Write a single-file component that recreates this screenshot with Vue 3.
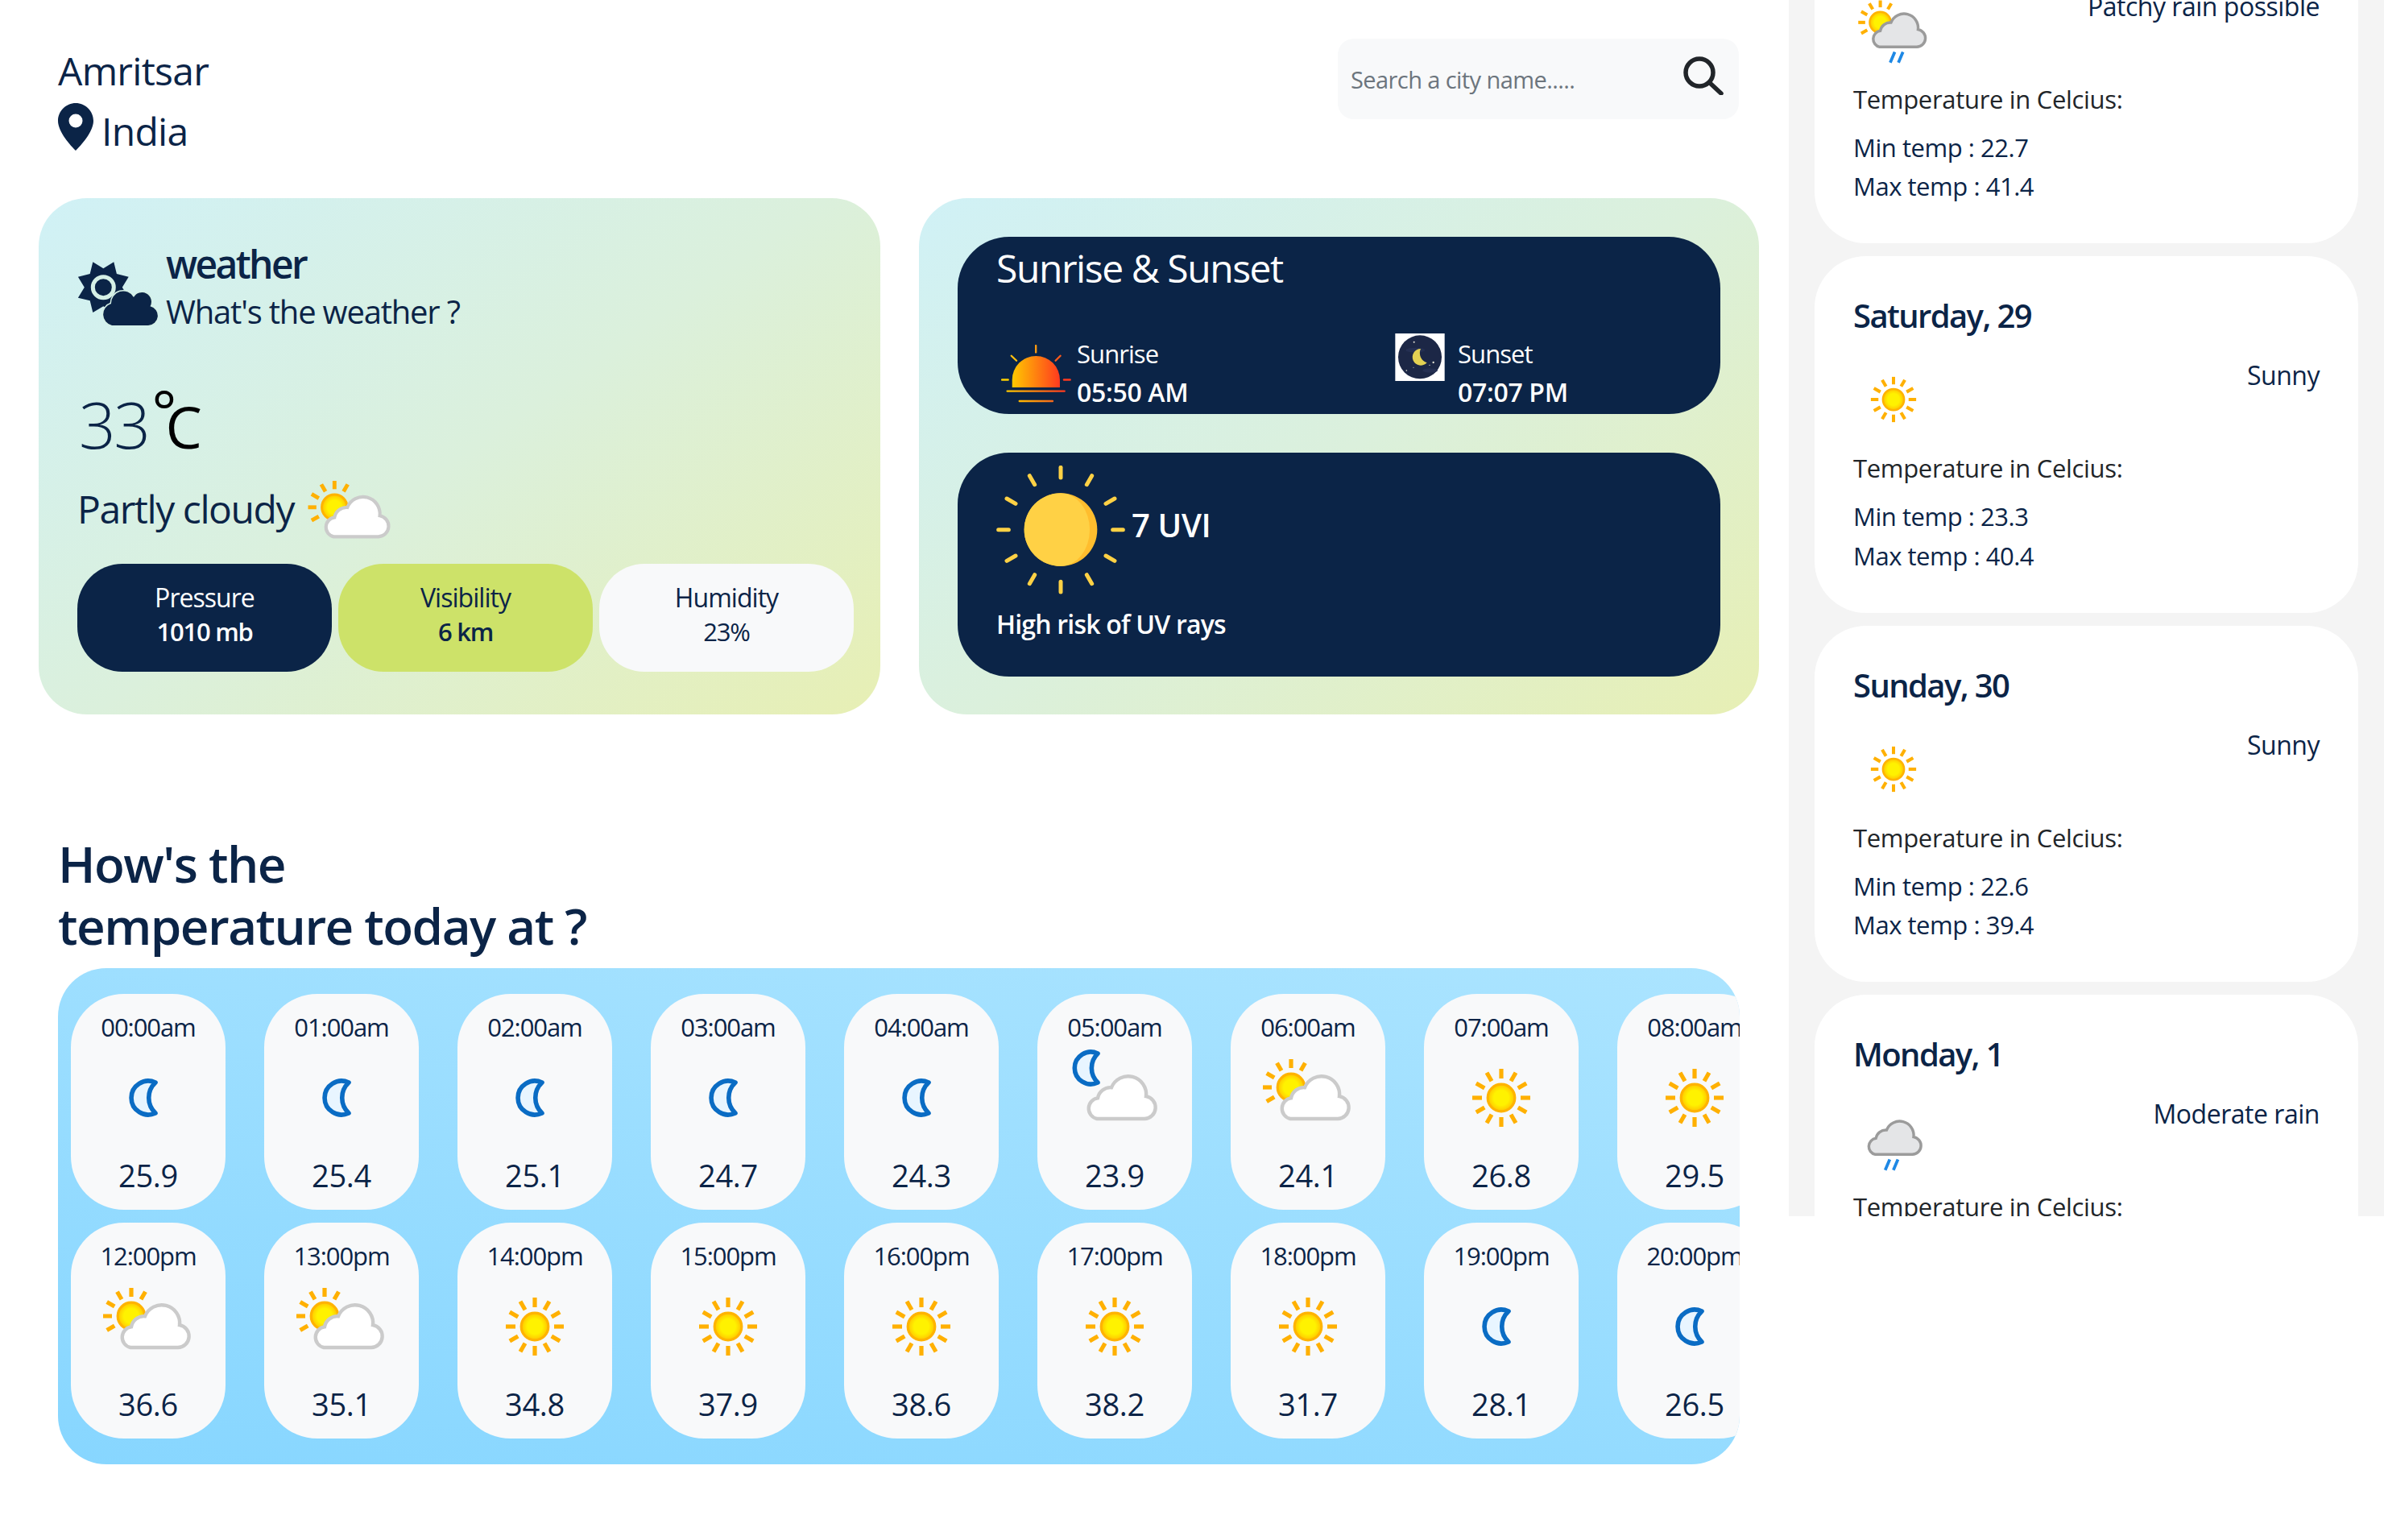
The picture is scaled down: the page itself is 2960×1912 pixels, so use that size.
<template>
  <div class="app">
    <!-- icon sprite -->
    <svg class="sprite" width="0" height="0" aria-hidden="true">
      <defs>
        <linearGradient id="rise-grad" x1="0" x2="1" y1="0" y2="0">
          <stop offset="0" stop-color="#ffc800" />
          <stop offset="1" stop-color="#ff3a1f" />
        </linearGradient>
        <linearGradient id="rise-line" gradientUnits="userSpaceOnUse" x1="123" x2="335" y1="0" y2="0">
          <stop offset="0" stop-color="#ffc800" />
          <stop offset="1" stop-color="#ff3a1f" />
        </linearGradient>
        <linearGradient id="rise-line2" gradientUnits="userSpaceOnUse" x1="168" x2="291" y1="0" y2="0">
          <stop offset="0" stop-color="#ffb800" />
          <stop offset="1" stop-color="#f4681c" />
        </linearGradient>
        <radialGradient id="sun-core">
          <stop offset="0.55" stop-color="#fff200" />
          <stop offset="1" stop-color="#ffc400" />
        </radialGradient>
        <path id="cloud-shape" d="M21 45H50.5a7 7 0 0 0 1-13.9A11.2 11.2 0 0 0 30 25.6a8 8 0 0 0-8.5 6.6 6.5 6.5 0 0 0-.5 12.8z" />
        <g id="rays-full" stroke="#ffb000" stroke-width="2.6">
          <path v-for="a in 12" :key="a" d="M32 20V14" :transform="`rotate(${a * 30} 32 32)`" />
        </g>
        <g id="rays-part" stroke="#ffb000" stroke-width="2.6">
          <path v-for="a in [-120, -90, -60, -30, 0, 30]" :key="a" d="M21.5 13.5V8" :transform="`rotate(${a} 21.5 25.5)`" />
        </g>
        <symbol id="i-sun" viewBox="0 0 64 64">
          <use href="#rays-full" />
          <circle cx="32" cy="32" r="8.4" fill="url(#sun-core)" stroke="#ffb300" stroke-width="1.6" />
        </symbol>
        <symbol id="i-moon" viewBox="0 0 64 64">
          <path d="M36.5 22.5A10.5 10.5 0 1 0 36.5 41.5A13 13 0 0 1 36.5 22.5z" fill="#e8f5ff" stroke="#0a6cc4" stroke-width="2.8" stroke-linejoin="round" />
        </symbol>
        <symbol id="i-partly" viewBox="0 0 64 64">
          <use href="#rays-part" />
          <circle cx="21.5" cy="25.5" r="8.4" fill="url(#sun-core)" stroke="#ffb300" stroke-width="1.6" />
          <use href="#cloud-shape" fill="#fff" stroke="#cbcbcb" stroke-width="2.2" />
        </symbol>
        <symbol id="i-night-cloud" viewBox="0 0 64 64">
          <path d="M21.5 4.500A10 10 0 1 0 21.5 22.500A12.500 12.500 0 0 1 21.5 4.500z" fill="#e8f5ff" stroke="#0a6cc4" stroke-width="2.8" stroke-linejoin="round" />
          <use href="#cloud-shape" fill="#fff" stroke="#cbcbcb" stroke-width="2.2" />
        </symbol>
        <symbol id="i-patchy" viewBox="0 0 64 64">
          <use href="#rays-part" />
          <circle cx="21.5" cy="25.5" r="8.4" fill="url(#sun-core)" stroke="#ffb300" stroke-width="1.6" />
          <use href="#cloud-shape" fill="#e4e5e7" stroke="#9b9b9b" stroke-width="2.2" />
          <path d="M33 49l-3.600 8.500M39.500 49l-3.600 8.500" stroke="#1e88e5" stroke-width="2.400" />
        </symbol>
        <symbol id="i-rain" viewBox="0 0 64 64">
          <use href="#cloud-shape" x="-3.500" fill="#e4e5e7" stroke="#9b9b9b" stroke-width="2.2" />
          <path d="M29 49l-3.600 8.500M35.500 49l-3.600 8.500" stroke="#1e88e5" stroke-width="2.400" />
        </symbol>
      </defs>
    </svg>

    <main class="main">
      <header class="top">
        <div class="place">
          <div class="city">Amritsar</div>
          <div class="country">
            <svg class="pin" viewBox="0 0 44 59">
              <path fill-rule="evenodd" d="M22 0C10 0 0 10 0 22c0 14 16 31 22 37 6-6 22-23 22-37C44 10 34 0 22 0zm0 13.500a8.500 8.500 0 1 1 0 17 8.500 8.500 0 0 1 0-17z" />
            </svg>
            <span>India</span>
          </div>
        </div>
        <div class="search">
          <input class="search-input" type="text" placeholder="Search a city name....." />
          <svg class="search-icon" viewBox="0 0 50 48" fill="none" stroke="#212529" stroke-width="5.500" stroke-linecap="round">
            <circle cx="20" cy="20" r="17" />
            <path d="M33 33l14 13" />
          </svg>
        </div>
      </header>

      <section class="panels">
        <div class="panel">
          <div class="brand">
            <svg class="brand-icon" viewBox="0 0 100 80">
              <polygon :points="starPoints" fill="#0b2447" />
              <circle cx="32.300" cy="31.700" r="13" fill="#0b2447" stroke="#d5f0e6" stroke-width="5" />
              <path d="M43 79H88a12 12 0 0 0 2.500-23.700A11.500 11.500 0 0 0 70 44 15 15 0 0 0 42 52a14 14 0 0 0 1 27z" fill="#0b2447" stroke="#d5f0e6" stroke-width="3" paint-order="stroke" />
            </svg>
            <div class="brand-text">
              <div class="brand-title">weather</div>
              <div class="brand-sub">What's the weather ?</div>
            </div>
          </div>
          <div class="temp"><span class="temp-num">33</span><span class="deg">°</span><span class="deg-c">C</span></div>
          <div class="cond">
            <span>Partly cloudy</span>
            <svg class="cond-icon"><use href="#i-partly" /></svg>
          </div>
          <div class="pills">
            <div class="pill pill-dark"><div>Pressure</div><b>1010 mb</b></div>
            <div class="pill pill-lime"><div>Visibility</div><b>6 km</b></div>
            <div class="pill pill-light"><div>Humidity</div><b class="thin">23%</b></div>
          </div>
        </div>

        <div class="panel panel-side">
          <div class="dark-box sun-box">
            <div class="sun-title">Sunrise &amp; Sunset</div>
            <div class="sun-row">
              <div class="sun-col">
                <svg class="rise-icon" viewBox="100 85 260 215" fill="none" stroke-linecap="round">
                  <path d="M141 243V215A88 88 0 0 1 318 215V243z" fill="url(#rise-grad)" />
                  <g stroke-width="7">
                    <path d="M229 88V113" stroke="#ff9a10" />
                    <path d="M138 126L157 144" stroke="#ffc010" />
                    <path d="M320 126L302 144" stroke="#ff5a1a" />
                    <path d="M103 215H126" stroke="#ffd000" />
                    <path d="M333 215H356" stroke="#ff3a1f" />
                    <path d="M123 257H335" stroke="url(#rise-line)" />
                    <path d="M168 294H291" stroke="url(#rise-line2)" />
                  </g>
                </svg>
                <div class="sun-text"><div class="sun-label">Sunrise</div><b>05:50 AM</b></div>
              </div>
              <div class="sun-col">
                <svg class="set-icon" viewBox="0 0 184 177">
                  <rect width="184" height="177" fill="#fff" />
                  <circle cx="92" cy="88" r="81" fill="#1c2746" />
                  <ellipse cx="75" cy="62" rx="36" ry="9" fill="#242f52" />
                  <ellipse cx="130" cy="138" rx="28" ry="8" fill="#242f52" />
                  <path d="M95 57A31 31 0 1 0 118 109A38 38 0 0 1 95 57z" fill="#e3d153" />
                  <g fill="#e8e6d8">
                    <circle cx="70" cy="32" r="3" />
                    <circle cx="142" cy="108" r="3.500" />
                    <circle cx="128" cy="118" r="2" />
                    <circle cx="42" cy="138" r="2.500" />
                    <circle cx="68" cy="127" r="1.500" />
                  </g>
                </svg>
                <div class="sun-text"><div class="sun-label">Sunset</div><b>07:07 PM</b></div>
              </div>
            </div>
          </div>

          <div class="dark-box uv-box">
            <div class="uv-row">
              <svg class="uv-icon" viewBox="80 533 480 480">
                <g stroke="#ffd145" stroke-width="15" stroke-linecap="round">
                  <path v-for="a in 12" :key="a" d="M320 540V578" :transform="`rotate(${a * 30} 320 772)`" />
                </g>
                <circle cx="320" cy="772" r="136" fill="#ffbd2e" />
                <path d="M320 636A136 136 0 0 0 320 908A108 136 0 0 0 320 636z" fill="#ffd145" />
              </svg>
              <span class="uv-val">7 UVI</span>
            </div>
            <div class="uv-note">High risk of UV rays</div>
          </div>
        </div>
      </section>

      <section class="today">
        <h2 class="today-title">How's the<br />temperature today at ?</h2>
        <div class="hours">
          <div v-for="h in hours" :key="h.time" class="hour">
            <div class="hour-time">{{ h.time }}</div>
            <svg class="hour-icon"><use :href="`#i-${h.icon}`" /></svg>
            <div class="hour-temp">{{ h.temp }}</div>
          </div>
        </div>
      </section>
    </main>

    <aside ref="sideEl" class="side">
      <div v-for="d in days" :key="d.day" class="day">
        <div class="day-name">{{ d.day }}</div>
        <div class="day-row">
          <svg class="day-icon"><use :href="`#i-${d.icon}`" /></svg>
          <div class="day-cond">{{ d.cond }}</div>
        </div>
        <div class="day-label">Temperature in Celcius:</div>
        <div class="day-temp">Min temp : {{ d.min }}</div>
        <div class="day-temp">Max temp : {{ d.max }}</div>
      </div>
    </aside>
  </div>
</template>

<script setup>
import { ref, computed, onMounted } from 'vue'

const sideEl = ref(null)

const makeRow = (rows, suffix) =>
  rows.map(([time, icon, temp]) => ({ time: time + suffix, icon, temp }))

// 每行只显示前 9 个小时
const hours = [
  ...makeRow([
    ['00:00', 'moon', '25.9'],
    ['01:00', 'moon', '25.4'],
    ['02:00', 'moon', '25.1'],
    ['03:00', 'moon', '24.7'],
    ['04:00', 'moon', '24.3'],
    ['05:00', 'night-cloud', '23.9'],
    ['06:00', 'partly', '24.1'],
    ['07:00', 'sun', '26.8'],
    ['08:00', 'sun', '29.5']
  ], 'am'),
  ...makeRow([
    ['12:00', 'partly', '36.6'],
    ['13:00', 'partly', '35.1'],
    ['14:00', 'sun', '34.8'],
    ['15:00', 'sun', '37.9'],
    ['16:00', 'sun', '38.6'],
    ['17:00', 'sun', '38.2'],
    ['18:00', 'sun', '31.7'],
    ['19:00', 'moon', '28.1'],
    ['20:00', 'moon', '26.5']
  ], 'pm')
]

const days = [
  { day: 'Friday, 28', icon: 'patchy', cond: 'Patchy rain possible', min: '22.7', max: '41.4' },
  { day: 'Saturday, 29', icon: 'sun', cond: 'Sunny', min: '23.3', max: '40.4' },
  { day: 'Sunday, 30', icon: 'sun', cond: 'Sunny', min: '22.6', max: '39.4' },
  { day: 'Monday, 1', icon: 'rain', cond: 'Moderate rain', min: '21.8', max: '35.2' }
]

// 8-point sun for the brand icon
const starPoints = computed(() => {
  const pts = []
  for (let i = 0; i < 16; i++) {
    const r = i % 2 ? 34 : 23.5
    const a = (i * 22.5 * Math.PI) / 180
    pts.push(`${(32.3 + r * Math.sin(a)).toFixed(1)},${(31.7 - r * Math.cos(a)).toFixed(1)}`)
  }
  return pts.join(' ')
})

onMounted(() => {
  if (sideEl.value) sideEl.value.scrollTop = 156
})
</script>

<style>
body {
  background: #fff;
}
</style>

<style scoped>
.app {
  display: flex;
  align-items: flex-start;
  width: 2960px;
  height: 1912px;
  overflow: hidden;
  color: #0b2447;
  font-family: "Open Sans", "Noto Sans", sans-serif;
  letter-spacing: -0.02em;
}

.sprite {
  width: 0;
  height: 0;
  display: block;
  flex: none;
}

.main {
  width: 2221px;
  flex: none;
}

/* header */
.top {
  height: 246px;
  padding: 48px 62px 0 72px;
  box-sizing: border-box;
  display: flex;
  justify-content: space-between;
  align-items: flex-start;
}

.place {
  font-size: 48px;
  line-height: 75px;
  margin-top: 2px;
  letter-spacing: -0.015em;
}

.country {
  display: flex;
  align-items: center;
  gap: 10px;
}

.pin {
  width: 44px;
  height: 59px;
  fill: #0b2447;
  margin-top: -10px;
}

.search {
  width: 498px;
  height: 100px;
  border-radius: 20px;
  background: #f8f9fa;
  display: flex;
  align-items: center;
  padding: 0 19px 0 16px;
  box-sizing: border-box;
}

.search-input {
  flex: 1;
  min-width: 0;
  border: none;
  outline: none;
  background: transparent;
  padding: 0;
  font: inherit;
  font-size: 29px;
  letter-spacing: -0.02em;
  color: #0b2447;
}

.search-input::placeholder {
  color: #6c757d;
  opacity: 1;
}

.search-icon {
  width: 50px;
  height: 48px;
  margin-top: -8px;
}

/* panels */
.panels {
  display: flex;
  gap: 48px;
  padding-left: 48px;
}

.panel {
  width: 1045px;
  height: 641px;
  box-sizing: border-box;
  border-radius: 60px;
  background: linear-gradient(145deg, #d0f1f6 0%, #dbf0dc 50%, #e7efb4 100%);
  padding: 48px 32px 0 48px;
}

.panel-side {
  width: 1043px;
  padding: 48px;
  display: flex;
  flex-direction: column;
  gap: 48px;
}

.brand {
  display: flex;
  align-items: center;
  gap: 10px;
  height: 126px;
}

.brand-icon {
  width: 100px;
  height: 80px;
  flex: none;
  margin-top: 16px;
}

.brand-title {
  font-size: 48px;
  line-height: 60px;
  font-weight: 600;
  letter-spacing: -0.055em;
}

.brand-sub {
  font-size: 40px;
  line-height: 58px;
  letter-spacing: -0.03em;
}

.temp {
  height: 110px;
  line-height: 110px;
  font-size: 80px;
  margin-top: 51px;
  padding-left: 2px;
  white-space: nowrap;
}

.temp-num {
  font-weight: 300;
  letter-spacing: -0.03em;
}

.deg,
.deg-c {
  color: #000;
  font-size: 72px;
  letter-spacing: 0;
  line-height: 0;
}

.deg {
  vertical-align: 20px;
  margin-right: -14px;
  margin-left: 4px;
}

.cond {
  display: flex;
  align-items: center;
  gap: 10px;
  font-size: 48px;
  height: 72px;
  margin-top: 14px;
  letter-spacing: -0.03em;
}

.cond-icon {
  width: 120px;
  height: 120px;
  flex: none;
  margin-top: 22px;
}

.pills {
  display: flex;
  gap: 8px;
  margin-top: 33px;
}

.pill {
  width: 316px;
  height: 134px;
  box-sizing: border-box;
  border-radius: 56px;
  display: flex;
  flex-direction: column;
  align-items: center;
  justify-content: center;
  padding-bottom: 9px;
  font-size: 32px;
  line-height: 43px;
  letter-spacing: -0.03em;
}

.pill b {
  font-size: 31px;
  font-weight: 600;
  letter-spacing: -0.04em;
}

.pill b.thin {
  font-weight: 400;
}

.pill-dark {
  background: #0b2447;
  color: #fff;
}

.pill-lime {
  background: #cde269;
}

.pill-light {
  background: #f8f9fa;
}

.dark-box {
  border-radius: 64px;
  background: #0b2447;
  color: #fff;
  flex: none;
  padding: 0 48px;
  box-sizing: border-box;
}

.sun-box {
  height: 220px;
}

.uv-box {
  height: 278px;
}

.sun-title {
  font-size: 48px;
  line-height: 78px;
  letter-spacing: -0.03em;
}

.sun-row {
  display: grid;
  grid-template-columns: 495px 1fr;
  margin-top: 42px;
}

.sun-col {
  display: flex;
  align-items: flex-start;
}

.sun-text {
  font-size: 32px;
  line-height: 47px;
  margin-top: 2px;
}

.sun-label {
  font-size: 31px;
  letter-spacing: -0.03em;
}

.sun-text b {
  font-weight: 600;
}

.rise-icon {
  width: 87px;
  height: 72px;
  margin: 14px 7px 0 6px;
  flex: none;
}

.set-icon {
  width: 62px;
  height: 59px;
  margin-right: 16px;
  flex: none;
}

.uv-row {
  display: flex;
  align-items: center;
  gap: 8px;
  padding-top: 16px;
}

.uv-icon {
  width: 160px;
  height: 160px;
  flex: none;
}

.uv-val {
  font-size: 40px;
  font-weight: 600;
  margin-top: -14px;
}

.uv-note {
  font-size: 32px;
  font-weight: 600;
  line-height: 44px;
  margin-top: 15px;
  letter-spacing: -0.025em;
}

/* hourly */
.today {
  padding: 147px 0 0 72px;
}

.today-title {
  margin: 0 0 14px;
  font-size: 62px;
  line-height: 77px;
  font-weight: 600;
  letter-spacing: -0.025em;
}

.hours {
  width: 2088px;
  height: 616px;
  box-sizing: border-box;
  border-radius: 60px;
  overflow: hidden;
  background: linear-gradient(190deg, #abe4ff 0%, #87d6ff 100%);
  padding: 32px 0 0 16px;
  display: grid;
  grid-template-columns: repeat(9, 192px);
  grid-auto-rows: 268px;
  column-gap: 48px;
  row-gap: 16px;
}

.hour {
  background: #f8f9fa;
  border-radius: 66px;
  display: flex;
  flex-direction: column;
  align-items: center;
  padding-top: 20px;
  box-sizing: border-box;
  white-space: nowrap;
}

.hour-time {
  font-size: 31px;
  line-height: 43px;
  letter-spacing: -0.035em;
}

.hour-icon {
  width: 128px;
  height: 128px;
  margin-top: 2px;
  flex: none;
}

.hour-temp {
  font-size: 38px;
  line-height: 54px;
  margin-top: 5px;
}

/* forecast sidebar */
.side {
  width: 739px;
  height: 1510px;
  flex: none;
  box-sizing: border-box;
  padding: 15.5px 32px 16px;
  background: #f4f4f4;
  overflow-y: scroll;
  scrollbar-width: none;
  display: flex;
  flex-direction: column;
  gap: 16px;
}

.day {
  flex: none;
  height: 442.5px;
  box-sizing: border-box;
  background: #fff;
  border-radius: 64px;
  padding: 46px 48px 0;
}

.day-name {
  font-size: 40px;
  line-height: 56px;
  font-weight: 600;
  letter-spacing: -0.04em;
}

.day-row {
  display: flex;
  justify-content: space-between;
  align-items: flex-start;
  margin-top: 26px;
}

.day-icon {
  width: 100px;
  height: 100px;
  flex: none;
}

.day-cond {
  font-size: 32px;
  line-height: 43px;
  font-weight: 500;
  margin-top: -2px;
  letter-spacing: -0.015em;
}

.day-label {
  margin-top: 14px;
  margin-bottom: 14px;
  font-size: 31px;
  line-height: 43px;
  font-weight: 500;
  color: #212529;
}

.day-temp {
  font-size: 31px;
  line-height: 48.5px;
  font-weight: 400;
  letter-spacing: -0.015em;
}
</style>
